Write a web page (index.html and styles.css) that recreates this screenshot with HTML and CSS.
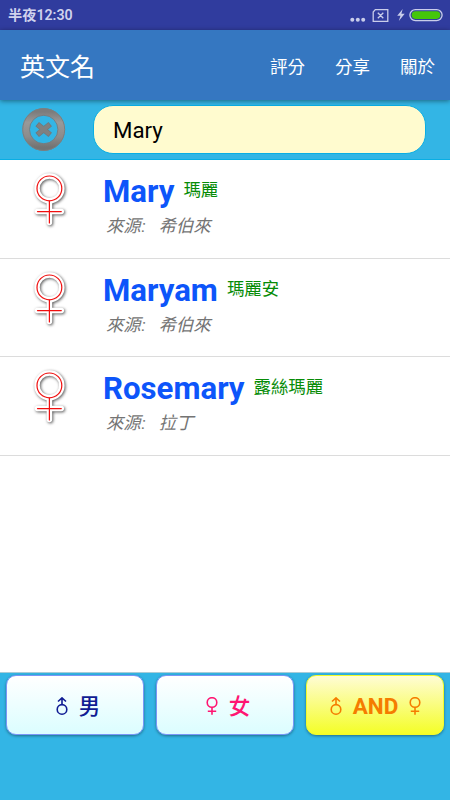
FILE: index.html
```html
<!DOCTYPE html>
<html lang="zh-Hant">
<head>
	<meta charset="utf-8">
	<title>英文名</title>
	<link rel="stylesheet" href="styles.css">
</head>
<body>
	<svg class="defs" width="0" height="0">
		<symbol id="female" viewBox="0 0 12 18">
			<circle cx="6" cy="5.5" r="4.8"/>
			<path d="M6 10.2V17.8M1.8 14.3H10.2"/>
		</symbol>
		<symbol id="male" viewBox="0 0 12 18">
			<circle cx="6" cy="12.4" r="4.8"/>
			<path d="M6 7.7V.9M2 4.5L6 .9L10 4.5"/>
		</symbol>
		<symbol id="woman" viewBox="0 0 34 56" overflow="visible">
			<g class="outline">
				<circle cx="17.4" cy="16.4" r="12.4"/>
				<path d="M17.4 29V50.6M5.5 39.6H29.3"/>
			</g>
			<g class="line">
				<circle cx="17.4" cy="16.4" r="12.4"/>
				<path d="M17.4 29V51M5.5 39.6H29.3"/>
			</g>
		</symbol>
	</svg>

	<div class="status">
		<span class="time">半夜12:30</span>
		<svg width="96" height="14" viewBox="0 0 96 14">
			<g fill="#c9cdea">
				<circle cx="5.3" cy="11.8" r="2"/>
				<circle cx="10.8" cy="11.8" r="2"/>
				<circle cx="16.2" cy="11.8" r="2"/>
				<path d="M55.7 1L50.2 7.8H53.5L51.8 13L57.7 5.8H54.4Z"/>
			</g>
			<path d="M28.3 1.6H40.8V13.3H26.2V4Z M30.8 4.8L36.3 10.2M36.3 4.8L30.8 10.2" fill="none" stroke="#c9cdea" stroke-width="1.3"/>
			<rect x="62.9" y="1.6" width="32.2" height="11" rx="5.5" fill="none" stroke="#c9cdea" stroke-width="1.3"/>
			<rect x="64.7" y="3.3" width="28.6" height="7.6" rx="3.8" fill="#45c60b"/>
		</svg>
	</div>

	<div class="appbar">
		<h1>英文名</h1>
		<a>評分</a>
		<a>分享</a>
		<a>關於</a>
	</div>

	<div class="search">
		<svg class="clear" width="46" height="46" viewBox="0 0 46 46">
			<defs>
				<linearGradient id="metal" x1="0" y1="0" x2="0" y2="1">
					<stop offset="0" stop-color="#7c7c7c"/>
					<stop offset=".3" stop-color="#999"/>
					<stop offset=".7" stop-color="#8c8c8c"/>
					<stop offset="1" stop-color="#737373"/>
				</linearGradient>
			</defs>
			<circle cx="22.7" cy="22.5" r="17.7" fill="none" stroke="url(#metal)" stroke-width="7.2"/>
			<circle cx="22.7" cy="22.5" r="21" fill="none" stroke="#7b7f80" stroke-width="1"/>
			<circle cx="22.7" cy="22.5" r="14.2" fill="none" stroke="#777" stroke-width=".8"/>
			<path d="M16.2 17.2L29.2 27.8M29.2 17.2L16.2 27.8" stroke="#70777a" stroke-width="5.6"/>
			<path d="M16.8 17.7L28.6 27.3M28.6 17.7L16.8 27.3" stroke="#808080" stroke-width="4.2"/>
		</svg>
		<input type="text" class="query" value="Mary">
	</div>

	<div class="list">
		<div class="row">
			<svg class="gender"><use href="#woman"/></svg>
			<div class="info">
				<div class="name"><b>Mary</b><span>瑪麗</span></div>
				<div class="origin">來源<i>:</i><span>希伯來</span></div>
			</div>
		</div>
		<div class="row">
			<svg class="gender"><use href="#woman"/></svg>
			<div class="info">
				<div class="name"><b>Maryam</b><span>瑪麗安</span></div>
				<div class="origin">來源<i>:</i><span>希伯來</span></div>
			</div>
		</div>
		<div class="row">
			<svg class="gender"><use href="#woman"/></svg>
			<div class="info">
				<div class="name"><b>Rosemary</b><span>露絲瑪麗</span></div>
				<div class="origin">來源<i>:</i><span>拉丁</span></div>
			</div>
		</div>
	</div>

	<div class="buttons">
		<button class="boy"><svg class="sign"><use href="#male"/></svg><span>男</span></button>
		<button class="girl"><svg class="sign"><use href="#female"/></svg><span>女</span></button>
		<button class="both"><svg class="sign"><use href="#male"/></svg>AND<svg class="sign"><use href="#female"/></svg></button>
	</div>
</body>
</html>
```

FILE: styles.css
```css
*{
	box-sizing: border-box;
}
body{
	margin: 0;
	height: 800px;
	display: flex;
	flex-direction: column;
	overflow: hidden;
	background-color: #33b5e5;
	font-family: Roboto, "Noto Sans CJK TC", sans-serif;
}
.defs{
	display: none;
}
.status{
	height: 30px;
	flex: none;
	display: flex;
	align-items: center;
	justify-content: space-between;
	padding: 0 7px 0 8px;
	background-color: #303c9e;
	color: #d0d3ed;
}
.time{
	font-size: 14.2px;
	font-weight: 600;
	line-height: 30px;
}
.appbar{
	height: 70px;
	flex: none;
	display: flex;
	align-items: center;
	gap: 30px;
	padding: 0 15px 0 20px;
	background-color: #3577c1;
	color: white;
	box-shadow: 0 1px 5px rgba(0,0,0,0.45);
	z-index: 1;
}
.appbar h1{
	flex: 1;
	margin: 0;
	font-size: 25px;
	font-weight: 400;
}
.appbar a{
	font-size: 17.5px;
}
.search{
	height: 60px;
	flex: none;
	display: flex;
	align-items: center;
	gap: 26px;
	padding-left: 21px;
	border-bottom: 1px solid #09aee4;
}
.query{
	width: 333px;
	height: 49px;
	border: 1px solid #09aee4;
	border-radius: 20px;
	background-color: #fffbcf;
	padding: 1px 19px 0;
	font: 22.3px Roboto, sans-serif;
	color: black;
	outline: none;
}
.list{
	height: 513px;
	flex: none;
	background-color: white;
	border-bottom: 1px solid #a9cbd6;
}
.row{
	height: 98.6px;
	display: flex;
	border-bottom: 1px solid #dcdcdc;
}
.gender{
	width: 34px;
	height: 56px;
	margin: 12px 0 0 32px;
	fill: none;
	stroke-linecap: round;
	overflow: visible;
}
.outline{
	stroke: white;
	stroke-width: 5.5;
	filter: drop-shadow(1px 1px 1.5px rgba(0,0,0,0.65));
}
.line{
	stroke: #f00f0f;
	stroke-width: 1.2;
}
.info{
	padding: 13px 0 0 37px;
}
.name{
	height: 37px;
	display: flex;
	line-height: 37px;
}
.name b{
	font-size: 31.2px;
	color: #0d55fa;
}
.name span{
	margin-left: 9px;
	font-size: 17.4px;
	line-height: 34px;
	color: #078c07;
}
.origin{
	padding-left: 3px;
	font-size: 17.3px;
	font-style: italic;
	line-height: 32px;
	color: #747474;
}
.origin i{
	margin-left: 1px;
}
.origin span{
	margin-left: 13px;
}
.buttons{
	display: grid;
	grid-template-columns: repeat(3, 1fr);
	gap: 12px;
	padding: 2px 6px 0;
}
button{
	height: 60px;
	display: flex;
	align-items: center;
	justify-content: center;
	gap: 11px;
	border: 1px solid #7a96f7;
	border-radius: 10px;
	padding: 2px 0 0 6px;
	background: linear-gradient(white, #dbfdff);
	box-shadow: 0 1px 3px rgba(0,0,0,0.4);
	font: 500 21.5px Roboto, "Noto Sans CJK TC", sans-serif;
}
button span{
	padding-bottom: 4px;
}
.sign{
	width: 12px;
	height: 18px;
	fill: none;
	stroke: currentColor;
	stroke-width: 1.6;
}
.boy{
	color: #101c94;
}
.girl{
	color: #ff1672;
}
.both{
	padding-left: 1px;
	font-size: 22.5px;
	font-weight: 700;
	color: #f57c00;
	border-color: #f2fb29;
	background: linear-gradient(#fffcd5, #f4fe27);
}
```
